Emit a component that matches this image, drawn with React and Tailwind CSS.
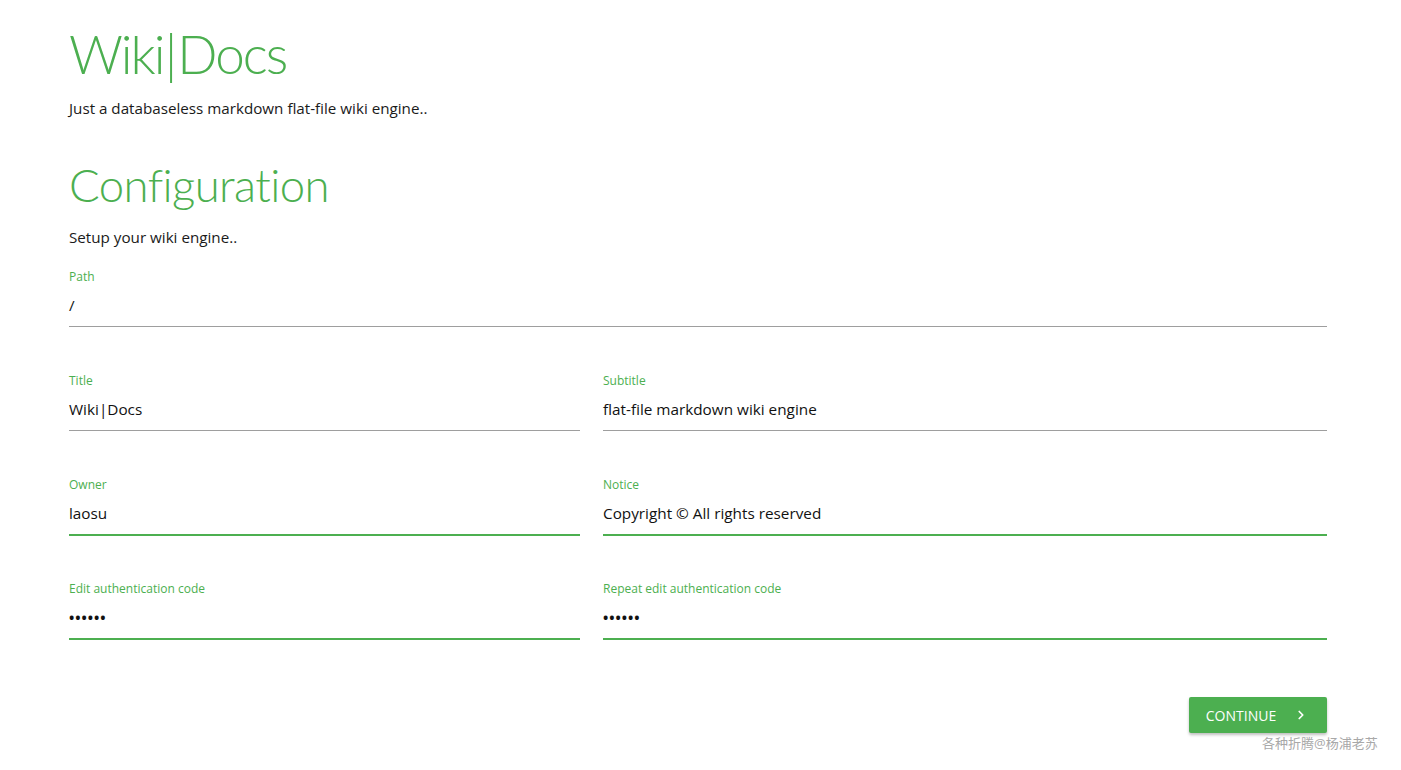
import React from "react";

const font = { fontFamily: '"Open Sans", "Noto Sans", "Noto Sans CJK SC", sans-serif' };
const head = { fontFamily: 'Lato, "Open Sans", sans-serif' };

function Field({ label, value, active, password }) {
  return (
    <div className="flex flex-col">
      <div className="h-4 text-[12px] leading-4 text-[#4caf50]">{label}</div>
      <div
        className={
          "box-content flex h-[41px] items-center border-b text-[15.3px] text-[#111] " +
          (active
            ? "border-[#4caf50] shadow-[0_1px_0_0_#4caf50]"
            : "border-[#9e9e9e]")
        }
      >
        {password ? (
          <span className="tracking-[1px] text-[14px] font-bold">••••••</span>
        ) : (
          value
        )}
      </div>
    </div>
  );
}

export default function App() {
  return (
    <div className="relative h-[770px] w-full bg-white" style={font}>
      <div className="mx-[69px] w-[1258px] pt-[18px]">
        <h1
          className="flex items-center text-[53px] font-light leading-[72px] tracking-[-2px] text-[#4caf50] [font-variant-ligatures:none]"
          style={head}
        >
          <span>Wiki</span>
          <span className="ml-[1px] mr-[2px]">|</span>
          <span>Docs</span>
        </h1>
        <p className="mt-[6px] text-[15.2px] leading-6 text-[#1a1a1a]">
          Just a databaseless markdown flat-file wiki engine..
        </p>
        <h2
          className="mt-[35px] text-[45.5px] font-light leading-[60px] tracking-[-0.6px] text-[#4caf50] [font-variant-ligatures:none]"
          style={head}
        >
          Configuration
        </h2>
        <p className="mt-[10px] text-[15.2px] leading-6 text-[#1a1a1a]">Setup your wiki engine..</p>
        <div className="mt-[20px] flex flex-col gap-[46px]">
          <Field label="Path" value="/" />
          <div className="grid grid-cols-[511px_1fr] gap-x-[23px] gap-y-[46px]">
            <Field label="Title" value="Wiki|Docs" />
            <Field label="Subtitle" value="flat-file markdown wiki engine" />
            <Field label="Owner" value="laosu" active />
            <Field label="Notice" value="Copyright © All rights reserved" active />
            <Field label="Edit authentication code" password active />
            <Field label="Repeat edit authentication code" password active />
          </div>
        </div>
        <div className="mt-[58px] flex justify-end">
          <button className="flex h-9 w-[138px] items-center justify-center gap-[18px] rounded-[2px] bg-[#4caf50] pr-[2px] text-[14px] text-white shadow-[0_2px_3px_rgba(0,0,0,0.25)]">
            <span>CONTINUE</span>
            <svg width="14" height="14" viewBox="0 0 24 24" fill="none" stroke="white" strokeWidth="3" strokeLinecap="round" strokeLinejoin="round">
              <path d="M9 6l6 6-6 6" />
            </svg>
          </button>
        </div>
      </div>
      <div className="absolute left-[1262px] top-[734px] text-[13px] leading-[18px] text-[#a8a8a8]">
        各种折腾@杨浦老苏
      </div>
    </div>
  );
}
